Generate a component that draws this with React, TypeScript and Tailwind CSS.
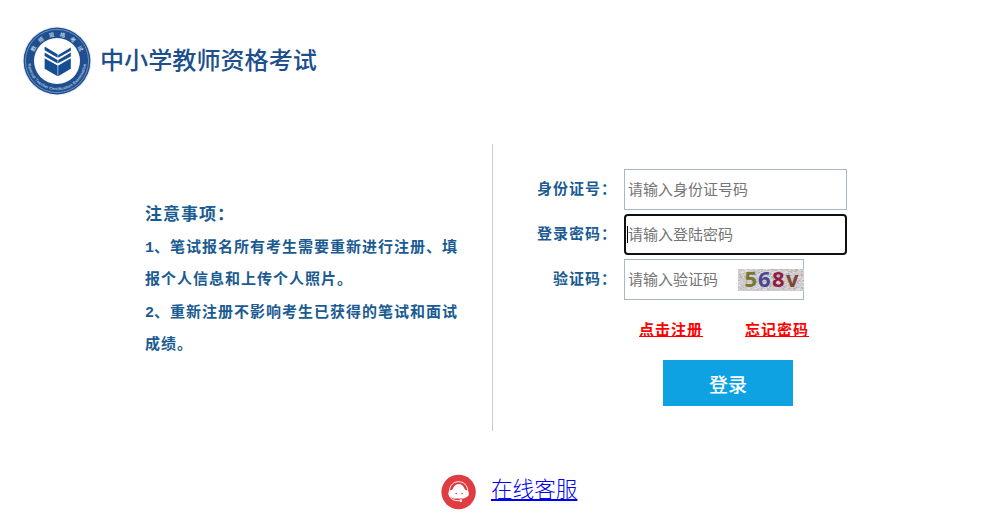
import type { ReactNode } from "react";

const captcha = [
  { char: "5", className: "fill-[#7b7634]", x: 6.5 },
  { char: "6", className: "fill-[#4b4594]", x: 20 },
  { char: "8", className: "fill-[#911c42]", x: 34 },
  { char: "v", className: "fill-[#81453a]", x: 48 },
];

const speckColors = ["#e9c3d4", "#b3c8bb", "#dfe3ee", "#dcb7b0", "#a3b5b3", "#cfd8ae", "#efe9ee", "#bfaecb"];

const noise = (n: number) => {
  const value = Math.sin(n * 12.9898) * 43758.5453;
  return value - Math.floor(value);
};

const specks = Array.from({ length: 600 }, (_, i) => ({
  x: Math.floor(noise(i + 1) * 65),
  y: Math.floor(noise(i + 701) * 21),
  color: speckColors[Math.floor(noise(i + 1501) * speckColors.length)],
}));

function ExamLogo() {
  return (
    <svg aria-hidden="true" className="h-[70px] w-[70px] shrink-0" viewBox="0 0 70 70">
      <defs>
        <path d="M10.5 35a24.5 24.5 0 0 1 49 0" id="ring-top" />
        <path d="M5.8 35a29.2 29.2 0 0 0 58.4 0" id="ring-bottom" />
      </defs>
      <circle cx="35" cy="35" fill="#e6edf5" r="34.5" />
      <circle cx="35" cy="35" fill="#1f4f91" r="33.4" />
      <circle cx="35" cy="35" fill="none" r="31.6" stroke="#8ea9cb" strokeWidth="0.7" />
      <circle cx="35" cy="35" fill="#fff" r="23" />
      <text className="fill-[#b5c8de] font-['Noto_Sans_CJK_SC',sans-serif] text-[5.5px] font-bold">
        <textPath href="#ring-top" startOffset="50%" textAnchor="middle" textLength="58">
          教师资格考试
        </textPath>
      </text>
      <text className="fill-[#b5c8de] font-['Liberation_Sans',sans-serif] text-[4px] font-bold">
        <textPath href="#ring-bottom" startOffset="50%" textAnchor="middle" textLength="86">
          National Teacher Certification Examination
        </textPath>
      </text>
      <g fill="#164e92">
        <path d="M22.6 20.5 35.6 28.2v3.6L22.6 24.2z" />
        <path d="M22.6 26.4 35.6 34v3.4L22.6 30z" />
        <path d="M22.6 32.2 35.6 39.4v10.8L22.6 42.8z" />
        <path d="M48.8 21.5 36.2 29v2.8l12.6-7z" />
        <path d="M48.8 26.6 36.2 34v3.2l12.6-6.8z" />
        <path d="M48.8 32.2 36.2 39.4v10.8l12.6-7.4z" />
      </g>
    </svg>
  );
}

function CaptchaImage() {
  return (
    <svg aria-label="568v" className="h-[22px] w-[66px] shrink-0 overflow-visible" role="img" viewBox="0 0 66 22">
      <rect fill="#ccced0" height="22" width="66" />
      {specks.map((speck, i) => (
        <rect fill={speck.color} height="1" key={i} width="1.5" x={speck.x} y={speck.y} />
      ))}
      <g className="font-['Noto_Sans',sans-serif] text-[22px] leading-none font-bold">
        {captcha.map((item) => (
          <text className={item.className} key={item.char} x={item.x} y="17.5">
            {item.char}
          </text>
        ))}
      </g>
    </svg>
  );
}

function ServiceIcon() {
  return (
    <svg aria-hidden="true" className="h-[36px] w-[36px] shrink-0" viewBox="0 0 36 36">
      <circle cx="17.6" cy="18" fill="#df3d42" r="17.2" />
      <path d="M8.4 17.5C8.4 4.4 26.8 4.4 26.8 17.5" fill="none" stroke="#fff" strokeWidth="0.9" />
      <path
        d="M9.6 16.2c1.4-.2 2.2-.8 2.8-2.4 1.2-2.6 3.2-3.8 5.4-3.8s4.2 1.2 5.2 3.8c.6 1.6 1.4 2.2 2.6 2.4 3 .6 3 6.2.2 6.6-1 1.2-2.4 1.8-4 1.8h-8.4c-1.6 0-3-.6-3.8-1.8-3-.4-3-6 0-6.6z"
        fill="#fff"
      />
      <path d="M8.6 21.5c.8 3.6 4 5.2 9.6 5.2" fill="none" stroke="#fff" strokeWidth="1" />
      <circle cx="19.8" cy="26.7" fill="#fff" r="1.4" />
      <circle cx="15.2" cy="19.6" fill="#df3d42" r="0.8" />
      <circle cx="21" cy="19.6" fill="#df3d42" r="0.8" />
    </svg>
  );
}

function Field({ label, children }: { label: string; children: ReactNode }) {
  return (
    <div className="flex h-[41px]">
      <span className="w-[131px] shrink-0 pr-[7px] pt-[7px] text-right text-[15px] leading-6 font-bold tracking-[1px] text-[#1a5b92]">
        {label}
      </span>
      {children}
    </div>
  );
}

const inputClass =
  "h-[41px] w-[223px] border border-[#a6b9ca] bg-white px-[3px] pb-[2px] text-[15px] text-[#757575] outline-none placeholder:text-[#757575]";

export default function App() {
  return (
    <div className="h-[529px] w-[983px] overflow-hidden bg-white font-['Noto_Sans_CJK_SC',sans-serif]">
      <header className="flex h-[144px] items-start pl-[22px] pt-[26px]">
        <ExamLogo />
        <h1 className="ml-[8px] mt-[15px] whitespace-nowrap text-[24.1px] leading-9 font-medium text-[#1c4f8c]">
          中小学教师资格考试
        </h1>
      </header>

      <main className="flex h-[287px]">
        <section className="w-[493px] border-r border-[#cccccc] pl-[145px] pt-[53px] text-[#1a5b92]">
          <h2 className="text-[17px] leading-8 font-bold tracking-[1px]">注意事项：</h2>
          <div className="mt-[4px] whitespace-nowrap font-['Liberation_Mono','Noto_Sans_CJK_SC',sans-serif] text-[15px] leading-8 font-bold tracking-[1px]">
            <p>
              <span className="tracking-normal">1</span>、笔试报名所有考生需要重新进行注册、填
              <br />
              报个人信息和上传个人照片。
            </p>
            <p className="mt-px">
              <span className="tracking-normal">2</span>、重新注册不影响考生已获得的笔试和面试
              <br />
              成绩。
            </p>
          </div>
        </section>

        <form className="flex w-[490px] flex-col pt-[25px]" onSubmit={(e) => e.preventDefault()}>
          <div className="flex flex-col gap-[4px]">
            <Field label="身份证号：">
              <input className={inputClass} placeholder="请输入身份证号码" type="text" />
            </Field>
            <Field label="登录密码：">
              <div className="flex h-[41px] w-[223px] items-center rounded-[4px] border-2 border-[#101010] pl-px">
                <span className="h-[17px] w-px bg-black" />
                <input
                  className="w-[200px] text-[15px] outline-none placeholder:text-[#757575]"
                  placeholder="请输入登陆密码"
                  type="password"
                />
              </div>
            </Field>
            <Field label="验证码：">
              <div className="flex h-[41px] w-[180px] items-center border border-[#a6b9ca] pl-[3px]">
                <input
                  className="w-[110px] text-[15px] outline-none placeholder:text-[#757575]"
                  placeholder="请输入验证码"
                  type="text"
                />
                <CaptchaImage />
              </div>
            </Field>
          </div>

          <div className="mt-[17px] flex gap-[42px] pl-[146px] text-[15px] leading-6 font-bold tracking-[1px] text-[#ff0000] underline">
            <a href="#register">点击注册</a>
            <a href="#forgot">忘记密码</a>
          </div>
          <button
            className="ml-[170px] mt-[19px] h-[46px] w-[130px] bg-[#0fa2e3] pt-[2px] text-[19px] font-medium text-white"
            type="submit"
          >
            登录
          </button>
        </form>
      </main>

      <footer className="flex items-center pl-[441px] pt-[43px]">
        <ServiceIcon />
        <a
          className="ml-[14px] -mt-[8px] text-[21.6px] leading-8 font-light text-[#0000ee] underline"
          href="#service"
        >
          在线客服
        </a>
      </footer>
    </div>
  );
}
